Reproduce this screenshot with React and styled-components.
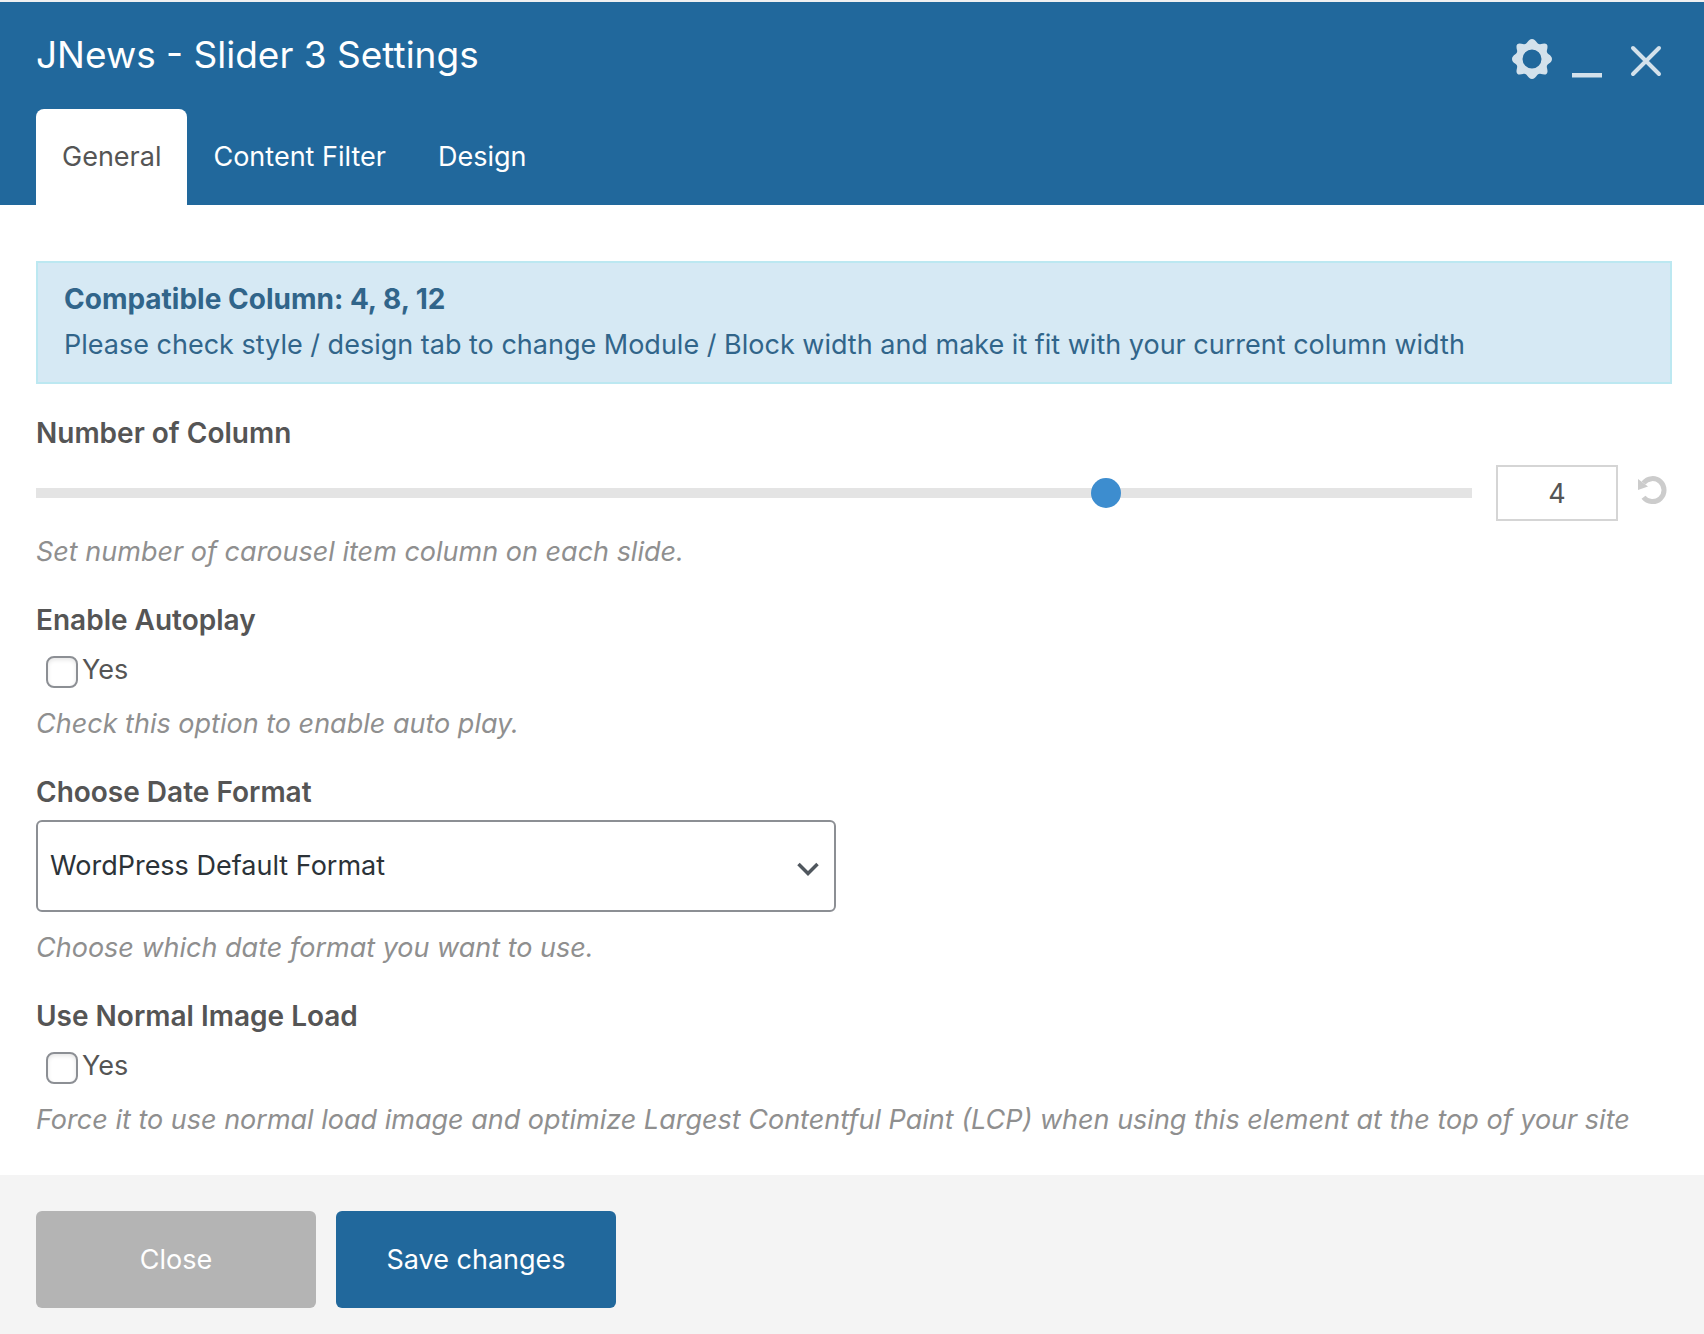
import { useState } from "react";
import styled, { createGlobalStyle } from "styled-components";

const App = () => {
  const [tab, setTab] = useState("General");
  const [columns, setColumns] = useState(4);

  return (
    <Panel>
      <GlobalStyle />
      <Header>
        <TitleBar>
          <Title>JNews - Slider 3 Settings</Title>
          <Controls>
            <IconButton type="button" aria-label="Settings">
              <GearIcon />
            </IconButton>
            <IconButton type="button" aria-label="Minimize">
              <MinimizeIcon />
            </IconButton>
            <IconButton type="button" aria-label="Close panel">
              <CloseIcon />
            </IconButton>
          </Controls>
        </TitleBar>
        <Tabs>
          {["General", "Content Filter", "Design"].map((name) => (
            <Tab key={name} type="button" $active={tab === name} onClick={() => setTab(name)}>
              {name}
            </Tab>
          ))}
        </Tabs>
      </Header>

      <Content>
        <Notice>
          <NoticeTitle>Compatible Column: 4, 8, 12</NoticeTitle>
          <span>Please check style / design tab to change Module / Block width and make it fit with your current column width</span>
        </Notice>

        <Field>
          <Label htmlFor="columns">Number of Column</Label>
          <SliderRow>
            <Slider id="columns" type="range" min="1" max="5" value={columns} onChange={(e) => setColumns(e.target.value)} />
            <NumberBox type="text" aria-label="Number of Column value" value={columns} onChange={(e) => setColumns(e.target.value)} />
            <IconButton type="button" aria-label="Reset" onClick={() => setColumns(4)}>
              <ResetIcon />
            </IconButton>
          </SliderRow>
          <Description>Set number of carousel item column on each slide.</Description>
        </Field>

        <Field>
          <Label as="h2">Enable Autoplay</Label>
          <CheckRow>
            <Checkbox type="checkbox" />
            Yes
          </CheckRow>
          <Description>Check this option to enable auto play.</Description>
        </Field>

        <Field>
          <Label htmlFor="date-format">Choose Date Format</Label>
          <SelectWrapper>
            <Select id="date-format">
              <option>WordPress Default Format</option>
            </Select>
            <ChevronIcon />
          </SelectWrapper>
          <Description>Choose which date format you want to use.</Description>
        </Field>

        <Field>
          <Label as="h2">Use Normal Image Load</Label>
          <CheckRow>
            <Checkbox type="checkbox" />
            Yes
          </CheckRow>
          <Description>
            Force it to use normal load image and optimize Largest Contentful Paint (LCP) when using this element at the top of your site
          </Description>
        </Field>
      </Content>

      <Footer>
        <Button type="button">Close</Button>
        <Button type="button" $primary>Save changes</Button>
      </Footer>
    </Panel>
  );
};

export default App;

const GearIcon = () => (
  <svg width="40" height="40" viewBox="-20 -20 40 40" fill="#d3e1eb" aria-hidden="true">
    <path
      fillRule="evenodd"
      d="M0 -20C2 -20 3.5 -18.5 4.5 -17C6 -15 7 -14.5 9 -15C11 -15.5 13.5 -16 14.7 -14.7C16 -13.5 15.5 -11 15 -9C14.5 -7 15 -6 17 -4.5C18.5 -3.5 20 -2 20 0
        C20 2 18.5 3.5 17 4.5C15 6 14.5 7 15 9C15.5 11 16 13.5 14.7 14.7C13.5 16 11 15.5 9 15C7 14.5 6 15 4.5 17C3.5 18.5 2 20 0 20
        C-2 20 -3.5 18.5 -4.5 17C-6 15 -7 14.5 -9 15C-11 15.5 -13.5 16 -14.7 14.7C-16 13.5 -15.5 11 -15 9C-14.5 7 -15 6 -17 4.5C-18.5 3.5 -20 2 -20 0
        C-20 -2 -18.5 -3.5 -17 -4.5C-15 -6 -14.5 -7 -15 -9C-15.5 -11 -16 -13.5 -14.7 -14.7C-13.5 -16 -11 -15.5 -9 -15C-7 -14.5 -6 -15 -4.5 -17C-3.5 -18.5 -2 -20 0 -20Z
        M0 -9.5A9.5 9.5 0 1 0 0 9.5A9.5 9.5 0 1 0 0 -9.5Z"
    />
  </svg>
);

const MinimizeIcon = () => (
  <svg width="30" height="40" viewBox="0 0 30 40" aria-hidden="true">
    <path d="M0 34h30v4.5H0z" fill="#d3e1eb" />
  </svg>
);

const CloseIcon = () => (
  <svg width="46" height="40" viewBox="0 0 46 40" aria-hidden="true">
    <path d="M11 9l26 26M37 9L11 35" stroke="#d3e1eb" strokeWidth="4" strokeLinecap="round" />
  </svg>
);

const ResetIcon = () => (
  <svg width="30" height="34" viewBox="0 0 30 34" fill="none" aria-hidden="true">
    <path d="M5.5 21.2A11.5 11.5 0 1 0 5.5 7" stroke="#ccc" strokeWidth="5" />
    <path d="M0 3v11l10-3.500z" fill="#ccc" />
  </svg>
);

const ChevronIcon = () => (
  <Chevron width="22" height="14" viewBox="0 0 22 14" fill="none" aria-hidden="true">
    <path d="M1.500 2l9.500 9.500L20.500 2" stroke="#50575e" strokeWidth="3.500" />
  </Chevron>
);

const GlobalStyle = createGlobalStyle`
  * {
    box-sizing: border-box;
  }

  body {
    margin: 0;
    background: #fff;
    font-family: Inter, "Liberation Sans", sans-serif;
    font-size: 27px;
    line-height: 46px;
    color: #555;
  }

  button, input, select {
    font: inherit;
    color: inherit;
  }
`;

const Panel = styled.div`
  display: flex;
  flex-direction: column;
  min-height: 100vh;
  border-top: 2px solid #f0f0f1;
`;

const Header = styled.header`
  padding: 29px 36px 0;
  background: #21689c;
  color: #fff;
`;

const TitleBar = styled.div`
  display: flex;
  justify-content: space-between;
  margin-bottom: 30px;
`;

const Title = styled.h1`
  margin: 0;
  font-size: 37px;
  line-height: 48px;
  font-weight: 400;
`;

const Controls = styled.div`
  display: flex;
  align-items: center;
  gap: 20px;
  padding-top: 8px;
`;

const IconButton = styled.button`
  display: flex;
  padding: 0;
  border: 0;
  background: none;
  cursor: pointer;
`;

const Tabs = styled.nav`
  display: flex;
`;

const Tab = styled.button`
  height: 96px;
  padding: 0 26px;
  border: 0;
  border-radius: 8px 8px 0 0;
  background: ${(props) => (props.$active ? "#fff" : "transparent")};
  color: ${(props) => (props.$active ? "#555" : "#fff")};
  cursor: pointer;
`;

const Content = styled.main`
  display: flex;
  flex-direction: column;
  flex: 1;
  gap: 22px;
  padding: 56px 32px 32px 36px;
`;

const Notice = styled.div`
  display: flex;
  flex-direction: column;
  margin-bottom: 4px;
  padding: 13px 26px 14px;
  border: 2px solid #bce8f1;
  background: #d6e9f4;
  color: #31658a;
`;

const NoticeTitle = styled.strong`
  font-size: 28px;
`;

const Field = styled.section`
  display: flex;
  flex-direction: column;
  align-items: stretch;
`;

const Label = styled.label`
  margin: 0;
  font-size: 28px;
  line-height: 46px;
  font-weight: 600;
`;

const SliderRow = styled.div`
  display: flex;
  align-items: center;
  margin: 9px 0 8px;
  padding-right: 4px;
`;

const Slider = styled.input`
  flex: 1;
  height: 30px;
  margin: 0 24px 0 0;
  appearance: none;
  background: linear-gradient(#e4e4e4, #e4e4e4) center / 100% 10px no-repeat;

  &::-webkit-slider-thumb {
    appearance: none;
    width: 30px;
    height: 30px;
    border-radius: 50%;
    background: #3d8dcf;
  }
`;

const NumberBox = styled.input`
  width: 122px;
  height: 56px;
  margin-right: 20px;
  border: 2px solid #d5d5d5;
  text-align: center;
`;

const Description = styled.p`
  margin: 0;
  font-style: italic;
  color: #8f8f8f;
`;

const CheckRow = styled.label`
  display: flex;
  align-items: center;
  align-self: flex-start;
  gap: 4px;
  margin: 4px 0 8px 10px;
`;

const Checkbox = styled.input`
  width: 32px;
  height: 32px;
  margin: 4px 0 0;
  appearance: none;
  border: 2px solid #8c8f94;
  border-radius: 8px;
  background: #fff;
  box-shadow: inset 0 2px 4px rgba(0, 0, 0, 0.1);
`;

const SelectWrapper = styled.div`
  position: relative;
  width: 800px;
  max-width: 100%;
  margin: 5px 0 13px;
`;

const Select = styled.select`
  display: block;
  width: 100%;
  height: 92px;
  padding: 0 48px 0 12px;
  appearance: none;
  border: 2px solid #8c8f94;
  border-radius: 6px;
  background: #fff;
  color: #2c3338;
`;

const Chevron = styled.svg`
  position: absolute;
  right: 17px;
  top: 42px;
  pointer-events: none;
`;

const Footer = styled.footer`
  display: flex;
  gap: 20px;
  padding: 36px 36px 26px;
  background: #f4f4f4;
`;

const Button = styled.button`
  width: 280px;
  height: 97px;
  border: 0;
  border-radius: 6px;
  background: ${(props) => (props.$primary ? "#21689c" : "#b4b4b4")};
  color: #fff;
  cursor: pointer;
`;
